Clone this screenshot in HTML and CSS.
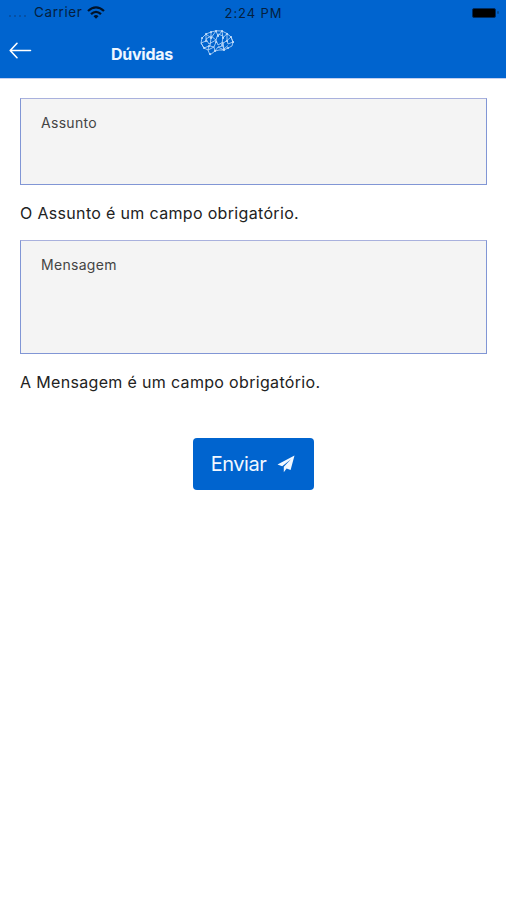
FILE: index.html
```html
<!DOCTYPE html>
<html lang="pt-BR">
<head>
<meta charset="utf-8">
<meta name="viewport" content="width=device-width">
<title>Dúvidas</title>
<link rel="stylesheet" href="styles.css">
</head>
<body>
<header class="header">
  <div class="status">
    <div class="carrier">
      <span class="signal"><i></i><i></i><i></i><i></i></span>
      <span>Carrier</span>
      <svg class="wifi" width="18" height="13" viewBox="0 0 18 13" fill="none" stroke="currentColor" stroke-width="2.3"><path d="M1 5Q9-2.3 17 5M4 8.1Q9 3.6 14 8.1"/><path d="M6.5 10.2Q9 8 11.500 10.2L9 12.8Z" fill="currentColor" stroke="none"/></svg>
    </div>
    <span class="time">2:24 PM</span>
    <span class="battery"><i></i></span>
  </div>
  <nav class="nav">
    <svg class="back" width="23" height="18" viewBox="0 0 23 18" fill="none" stroke="currentColor" stroke-width="1.6" stroke-linecap="round" stroke-linejoin="round"><path d="M21.500 8.500H1.500M8 1.300 1.200 8.500 8 15.700"/></svg>
    <h1 class="title">Dúvidas</h1>
    <svg class="brain" width="34" height="26" viewBox="0 0 34 26" fill="none" stroke="currentColor" stroke-width=".8" stroke-linejoin="round"><path d="M1 13 2 8 6 4 11 2 16 .8 22 1 27 3.5 31 7 33 12 32 16 28 18 24 20 19 20 15 21 10 25 8 20 4 18Z"/><path d="m1 13 5-2 0-7 5 4 5-7 2 5 4-5 1 7 4-4.500 0 7 4-3.500 2 5-5 2-1-3.500-5 3.500 1-8-5-2-2 6-5-4-5 3 3 5 7-4 2 5 5-3 1 7 4-3.500M1 13l3 5 5-2-1 4 6-3 1 4 3-4 6 3-1-4-5 1M11 2v6l-1 8 4 1 2-5"/><path d="M2 8h.1M6 4h.1M11 2h.1M16 1h.1M22 1h.1M27 4h.1M31 7h.1M33 12h.1M28 18h.1M24 20h.1M15 21h.1M10 24h.1M4 18h.1M6 11h.1M11 8h.1M18 6h.1M23 8h.1M16 12h.1M27 11h.1M22 15h.1M9 16h.1" stroke-width="1.9" stroke-linecap="round"/></svg>
  </nav>
</header>
<main class="form">
  <div class="field subject"><label>Assunto</label></div>
  <p class="error">O Assunto é um campo obrigatório.</p>
  <div class="field message"><label>Mensagem</label></div>
  <p class="error second">A Mensagem é um campo obrigatório.</p>
  <button class="send" type="button"><span>Enviar</span><svg width="18" height="18" viewBox="0 0 18 18"><path fill="currentColor" d="M17.500.5.500 9.500l4.700 1.700L14 4.200 6.800 11.800v5.400l2.800-3.700 4 1.500Z"/></svg></button>
</main>
</body>
</html>
```

FILE: styles.css
```css
* { box-sizing: border-box; }
body {
  margin: 0;
  min-height: 900px;
  background: #fff;
  color: #222;
  font-family: Inter, "Liberation Sans", sans-serif;
}
.header {
  height: 79px;
  background: #0064cf;
  border-bottom: 1px solid #c3cff0;
}
.status {
  height: 25px;
  padding: 0 7px 0 8px;
  display: grid;
  grid-template-columns: 1fr auto 1fr;
  align-items: center;
  color: #041f40;
  font-size: 13px;
  line-height: 25px;
}
.carrier { display: flex; align-items: center; font-size: 13.500px; letter-spacing: .6px; }
.signal { display: flex; gap: 3px; width: 26px; padding: 7px 0 0 1px; }
.signal i { width: 2px; height: 2px; border-radius: 1px; background: #084b98; }
.wifi { margin-left: 5px; color: #001329; }
.time { position: relative; top: 1px; letter-spacing: .9px; }
.battery { justify-self: end; display: flex; align-items: center; }
.battery i { width: 24px; height: 10px; border: 1px solid #002b5d; border-radius: 2px; background: #000; }
.battery::after { content: ""; width: 2px; height: 3px; margin-left: 1px; background: #064990; border-radius: 1px; }
.nav { display: flex; align-items: flex-start; height: 53px; padding-left: 9px; color: #fff; }
.back { margin-top: 17px; }
.title { width: 89px; margin: 19px 0 0 79px; font-size: 16px; line-height: 20px; font-weight: 700; letter-spacing: -.25px; color: #eef6ff; }
.brain { margin-top: 5px; color: #c4defb; }
.form { display: flex; flex-direction: column; padding: 19px 19px 0 20px; }
.field { padding: 15px 20px; background: #f4f4f4; border: 1px solid #8196d5; border-top-color: #a9b1dd; }
.field label { display: block; font-size: 14px; line-height: 18px; letter-spacing: .3px; color: #444; }
.subject { height: 87px; }
.message { height: 114px; }
.error { margin: 17px 0 16px; font-size: 16px; line-height: 22px; letter-spacing: .33px; }
.second { margin-bottom: 45px; }
.send {
  align-self: center;
  display: flex;
  align-items: center;
  justify-content: center;
  gap: 11px;
  width: 121px;
  height: 52px;
  padding: 0 1px 0 0;
  border: 0;
  border-radius: 4px;
  background: #0064cf;
  color: #f2f8ff;
  font: 400 20px/24px Inter, "Liberation Sans", sans-serif;
  letter-spacing: -.5px;
}
```
